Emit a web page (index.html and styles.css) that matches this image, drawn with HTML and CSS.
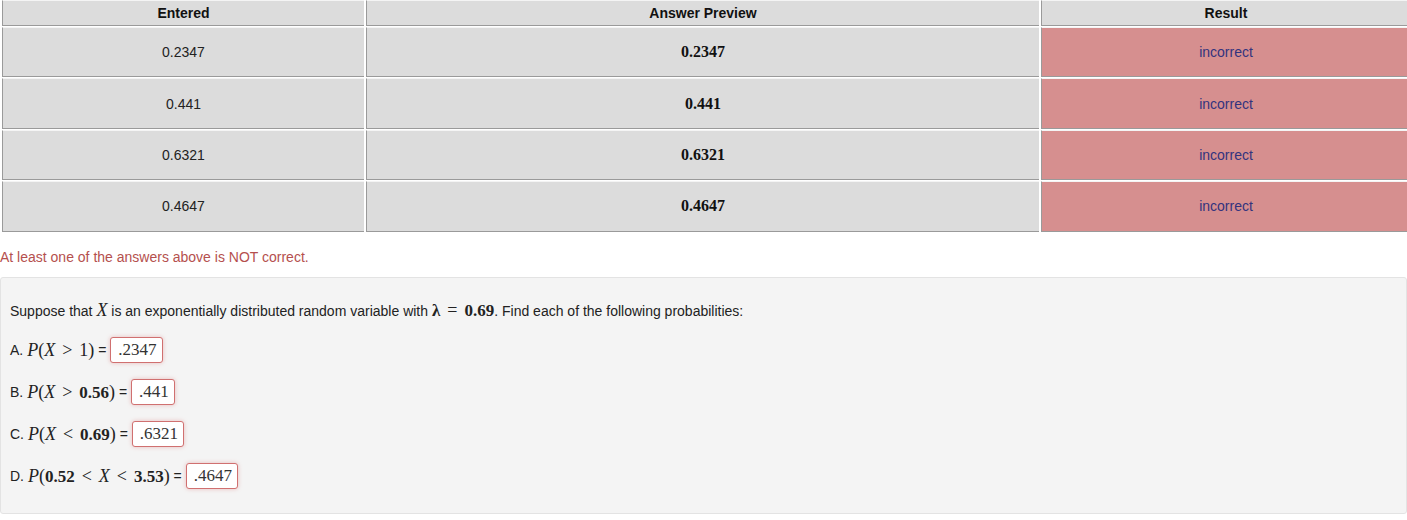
FILE: index.html
```html
<!DOCTYPE html>
<html>
<head>
<meta charset="utf-8">
<link rel="stylesheet" href="styles.css">
</head>
<body>
<table class="results">
  <thead>
    <tr><th class="c1">Entered</th><th class="c2">Answer Preview</th><th class="c3">Result</th></tr>
  </thead>
  <tbody>
    <tr><td>0.2347</td><td class="preview">0.2347</td><td class="bad">incorrect</td></tr>
    <tr><td>0.441</td><td class="preview">0.441</td><td class="bad">incorrect</td></tr>
    <tr><td>0.6321</td><td class="preview">0.6321</td><td class="bad">incorrect</td></tr>
    <tr><td>0.4647</td><td class="preview">0.4647</td><td class="bad">incorrect</td></tr>
  </tbody>
</table>
<div class="msg">At least one of the answers above is NOT correct.</div>
<div class="problem">
  <p class="intro">Suppose that <span class="m"><i>X</i></span> is an exponentially distributed random variable with <span class="m"><b>λ</b><span class="op">=</span><b>0.69</b></span>. Find each of the following probabilities:</p>
  <p class="q">A. <span class="m"><i>P</i>(<i>X</i><span class="op">&gt;</span>1)</span> = <span class="ans">.2347</span></p>
  <p class="q">B. <span class="m"><i>P</i>(<i>X</i><span class="op">&gt;</span><b>0.56</b>)</span> = <span class="ans">.441</span></p>
  <p class="q">C. <span class="m"><i>P</i>(<i>X</i><span class="op">&lt;</span><b>0.69</b>)</span> = <span class="ans">.6321</span></p>
  <p class="q">D. <span class="m"><i>P</i>(<b>0.52</b><span class="op">&lt;</span><i>X</i><span class="op">&lt;</span><b>3.53</b>)</span> = <span class="ans">.4647</span></p>
</div>
</body>
</html>
```

FILE: styles.css
```css
body {
  margin: 0;
  font-family: "Liberation Sans", Arial, sans-serif;
  font-size: 14px;
  color: #222;
  background: #fff;
}
.results {
  width: 1412px;
  border-collapse: separate;
  border-spacing: 2px 1px;
  margin: -1px 0 0 0;
}
.results th,
.results td {
  background: #dcdcdc;
  text-align: center;
  border-left: 1px solid #9a9a9a;
  border-bottom: 1px solid #9a9a9a;
  border-top: 1px solid #f4f4f4;
  padding: 0;
}
.results th {
  height: 24px;
  font-weight: bold;
  color: #111;
}
.results td {
  height: 48.4px;
  color: #222;
}
.results .c1 { width: 361px; }
.results .c2 { width: 672px; }
.results td.preview {
  font-family: "Liberation Serif", "Times New Roman", serif;
  font-weight: bold;
  font-size: 16px;
  color: #111;
}
.results td.bad {
  background: #d68f8f;
  color: #33337e;
}
.msg {
  color: #b5504e;
  margin-top: 16px;
  height: 20px;
}
.problem {
  margin-top: 8px;
  background: #f4f4f4;
  border: 1px solid #e3e3e3;
  border-radius: 3px;
  padding: 22px 9px 0;
  height: 213px;
}
.problem p {
  margin: 0;
}
.problem .intro {
  line-height: 22px;
  margin-bottom: 15px;
}
.problem .q {
  display: flex;
  align-items: center;
  white-space: pre;
  height: 26px;
  margin-bottom: 16px;
}
.m {
  font-family: "Liberation Serif", "Times New Roman", serif;
  font-size: 18px;
  line-height: 1;
}
.m i { font-style: italic; }
.m b { font-weight: bold; font-size: 17px; }
.op { margin: 0 7px; }
.ans {
  display: inline-block;
  font-family: "Liberation Serif", "Times New Roman", serif;
  font-size: 17px;
  line-height: 24px;
  padding: 0 5px 0 7px;
  background: #fff;
  border: 1px solid #d07070;
  border-radius: 3px;
  box-shadow: 0 0 4px rgba(220, 120, 120, 0.45);
  color: #333;
}
```
